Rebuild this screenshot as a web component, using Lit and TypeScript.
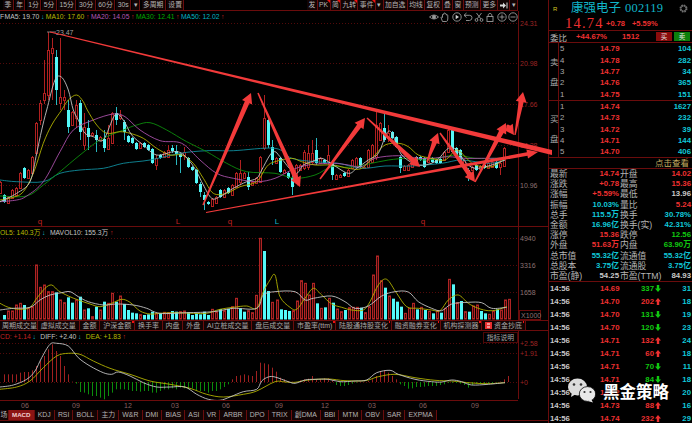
import { LitElement, html, svg, css } from 'lit';
import { customElement } from 'lit/decorators.js';

type Pts = number[][];

// coordinates below were read off 3x crops, so map them back to page pixels
const crop = (ox: number, oy: number, flat: number[]): Pts => {
  const out: Pts = [];
  for (let i = 0; i < flat.length; i += 2) out.push([ox + flat[i] / 3, oy + flat[i + 1] / 3]);
  return out;
};
const z1 = (f: number[]) => crop(0, 0, f);
const z8 = (f: number[]) => crop(0, 110, f);
const z9 = (f: number[]) => crop(275, 90, f);
const z10 = (f: number[]) => crop(0, 220, f);
const z11 = (f: number[]) => crop(275, 220, f);
const z6 = (f: number[]) => crop(0, 310, f);
const z7 = (f: number[]) => crop(275, 310, f);

// catmull-rom through the points
const curve = (p: Pts) => {
  let d = `M${p[0][0].toFixed(1)} ${p[0][1].toFixed(1)}`;
  for (let i = 0; i < p.length - 1; i++) {
    const a = p[Math.max(i - 1, 0)], b = p[i], c = p[i + 1], e = p[Math.min(i + 2, p.length - 1)];
    const c1 = [b[0] + (c[0] - a[0]) / 6, b[1] + (c[1] - a[1]) / 6];
    const c2 = [c[0] - (e[0] - b[0]) / 6, c[1] - (e[1] - b[1]) / 6];
    d += `C${c1[0].toFixed(1)} ${c1[1].toFixed(1)} ${c2[0].toFixed(1)} ${c2[1].toFixed(1)} ${c[0].toFixed(1)} ${c[1].toFixed(1)}`;
  }
  return d;
};

// [red?, bodyTop, bodyBottom, high, low], one every 4px starting at x=0
const CANDLES: number[][] = [
  [1,182,193],[0,195,202],[1,197,203],[1,190,198],[1,188,195],[1,173,188],[0,168,178],[1,170,178],
  [1,157,173],[1,123,153],[1,103,120,100,125],[1,93,100,60,104],[1,50,95,32,100],[1,48,53,38,100],
  [0,57,90,50,105],[1,97,103,38,110],[1,97,100,90,110],[0,110,127,100,133],[1,112,125],[1,105,118,100,128],
  [0,103,132,100,140],[1,127,145,113,150],[0,128,137,120,150],[1,133,135],[0,135,140,130,152],[1,137,140],
  [0,139,148,130,152],[1,138,149,125,150],[1,113,143],[0,113,120,107,125],[1,115,118,110,120],
  [0,122,132,120,140],[0,136,142],[0,138,143],[0,143,149],[1,143,148],[0,143,147],[0,145,150],
  [0,149,163],[1,158,165,155,170],[0,155,158],[1,152,157],[1,150,157,145,158],[0,148,151,145,153],
  [0,151,154,145,165],[0,154,157,153,173],[1,152,155,147,160],[0,158,167],[0,167,170],[0,170,183],
  [0,184,192,182,197],[0,195,200,192,210],[0,202,204],[1,199,206],[1,197,203],[0,190,197],[1,190,197],
  [0,188,193],[1,185,195],[1,173,187],[1,173,182,160,185],[1,173,178],[0,177,187,172,190],[1,182,185],
  [1,178,183],[1,157,182],[1,118,148,95,150],[0,120,145,115,148],[0,147,160,140,165],[1,158,163],
  [0,158,172],[1,170,173],[0,173,178],[0,178,187,172,195],[1,165,177],[1,165,170],[1,152,168,150,170],
  [1,153,167,145,170],[1,153,162,140,165],[0,150,163,138,165],[1,158,163],[0,160,163],[1,155,162,145,165],
  [0,162,175,160,180],[1,175,179],[1,175,177],[0,173,176],[1,170,176],[1,160,168],[1,158,167],[0,158,167],
  [1,167,168],[1,150,167],[1,145,162],[1,125,157,112,160],[1,123,140],[0,128,140,113,142],[1,133,138,125,142],
  [0,132,138],[0,137,147],[0,157,168,155,173],[1,166,170],[1,165,170],[1,162,167],[0,157,162],[0,157,160],
  [0,158,167],[1,158,162],[0,158,162],[0,160,163],[0,159,163],[1,152,160],[1,130,152],[0,130,152],
  [0,148,155],[0,150,162],[1,160,168],[0,170,178,168,181],[1,167,170],[0,165,170],[1,166,169],[0,165,168],
  [1,163,168],[1,162,167],[0,162,168],[1,163,167,160,175],[1,148,166],
];

// volume tops, crop y, negative = cyan, 4px apart from x=4
const VOL_A = [-285,273,273,255,250,-255,265,260,135,202,195,215,215,-217,240,248,-232,-248,240,-230,270,-265,290,-260,270,-245,250,220,-245,228,-252,-270,-278,-280,284,-285,-283,-275,280,-280,277,278,-273,-275,275,273,-277,-285,-280,-283,-275,-285,268,275,-267,272,-267,260,235,-265,-275,272,278,226,55,-93,-213,247];
const VOL_B = [240,-268,-270,-273,272,243,182,190,225,190,-250,265,-262,235,-248,267,275,-270,263,262,262,-263,278,260,165,108,182,-203,228,-236,-245,-260,280,265,250,-268,262,-270,274,-280,272,-278,265,178,-193,248,-243,275,-275,258,255,-273,-280,283,273,-268,270,240,238];

// macd bar ends in crop y, zero axis sits at 213
const MACD = [190,190,190,190,185,183,183,178,165,150,135,115,100,120,135,165,190,212,218,243,245,250,255,255,260,265,255,245,235,235,235,237,240,240,242,240,240,245,245,240,235,235,232,235,230,232,235,232,238,240,240,245,240,240,235,228,220,205,195,193,190,193,195,180,155,157,160,170,
  182,200,205,210,212,213,208,205,203,195,205,205,202,202,208,222,225,225,222,218,215,212,212,210,205,195,180,178,185,195,205,220,225,233,232,228,228,227,225,225,225,222,220,216,216,216,218,222,230,222,218,218,220,218,216,215,212,205,195];

const MA_LINES: [string, Pts][] = [
  ['ma50', [...z8([0,210,50,215,130,215,180,190,240,180,310,175,370,160,450,150,540,130,620,122,700,122,825,115]), ...z9([50,205,120,215,190,220,260,235,330,228,410,228,500,220,560,210,640,220,690,210])]],
  ['ma30', [...z8([0,258,80,258,130,225,180,185,240,135,300,90,370,60,410,45,450,38,500,60,560,95,620,125,680,160,740,185,825,190]), ...z9([60,265,120,255,170,230,220,232,280,222,340,210,400,205,460,210,540,195,600,205,660,205,690,205])]],
  ['ma20', [...z8([0,275,50,270,80,258,130,215,180,125,220,60,280,30,340,12,375,20,420,60,480,92,545,100,600,150,650,190,700,205,770,215,825,205]), ...z9([50,240,100,225,175,220,220,225,260,230,300,205,370,197,430,205,470,205,520,200,570,205,620,205,690,205])]],
  ['ma10', [...z8([0,270,40,262,70,245,100,190,130,100,155,45,185,0]), ...z1([205,300,230,285,250,305,262,330]), ...z8([290,45,320,70,360,65,390,70,430,85,470,115,510,135,545,135,580,160,610,205,640,250,680,250,720,230,770,215,800,170,825,155]), ...z9([50,205,80,215,120,225,175,225,220,235,260,235,300,195,330,165,370,160,400,170,430,195,470,205,510,210,545,180,575,205,600,225,650,230,690,205])]],
  ['ma5', [...z8([0,275,50,250,90,215,110,130,125,60,140,0]), ...z1([165,240,185,232,205,270,220,330]), ...z8([240,40,255,70,280,80,310,90,345,15,370,30,395,75,430,105,470,135,520,125,545,130,570,155,590,185,610,225,635,265,660,260,700,235,740,215,770,205,785,180,810,135,825,125]), ...z9([15,200,60,250,85,225,110,215,140,205,175,225,220,250,245,235,280,210,310,190,335,130,350,128,365,165,385,200,430,225,480,215,520,175,545,180,570,215,600,235,650,225,690,210])]],
];

const VOL_LINES: [string, Pts][] = [
  ['ma10', [...z10([0,250,25,262,60,268,90,262,110,235,135,205,155,195,175,212,205,228,235,240,270,252,300,260,335,250,365,238,390,247,420,273,450,282,480,280,520,278,580,280,620,280,660,268,700,262,740,258,770,265,790,215,810,180,825,165]), ...z11([15,230,45,262,65,268,90,235,115,205,140,225,170,252,200,262,230,270,265,270,285,245,310,195,335,178,365,220,395,260,430,265,470,270,495,272,520,240,550,225,580,250,610,265,640,272,665,270,695,260])]],
  ['ma5', [...z10([0,270,40,265,90,262,120,240,150,225,185,218,210,215,235,230,265,245,310,255,350,252,400,255,440,265,480,280,560,278,640,275,700,265,770,265,790,225,825,215]), ...z11([60,215,90,240,115,235,170,228,210,245,240,265,280,258,320,228,360,215,400,216,430,245,470,265,500,272,530,252,580,247,620,248,650,265,695,262])]],
];

const MACD_LINES: [string, Pts][] = [
  ['ma10', [...z6([0,235,50,228,90,210,130,170,170,135,205,127,240,130,280,150,330,172,390,190,450,210,510,220,570,232,620,250,670,258,730,250,770,240,825,212]), ...z7([30,213,60,214,100,207,160,204,210,209,270,209,310,197,360,190,420,200,480,208,530,210,590,216,640,218,690,215])]],
  ['ma5', [...z6([0,228,40,222,80,205,105,180,125,140,150,100,170,97,205,105,235,140,270,165,310,185,335,190,355,183,390,195,430,215,470,228,510,228,555,228,590,250,625,265,660,268,690,258,730,242,770,235,785,210,805,198,825,198]), ...z7([40,212,60,217,90,207,120,205,160,205,195,212,240,210,275,207,305,185,345,178,370,190,420,205,470,212,500,213,530,207,560,212,590,222,640,220,690,215])]],
];

// tapered shaft with a triangular head
const arrow = (x0: number, y0: number, x1: number, y1: number, tail = 1.5, neck = 5, head = 11, len = 10) => {
  const l = Math.hypot(x1 - x0, y1 - y0), ux = (x1 - x0) / l, uy = (y1 - y0) / l, nx = -uy, ny = ux;
  const bx = x1 - ux * len, by = y1 - uy * len;
  const p = [
    [x0 + nx * tail / 2, y0 + ny * tail / 2], [bx + nx * neck / 2, by + ny * neck / 2], [bx + nx * head / 2, by + ny * head / 2],
    [x1, y1],
    [bx - nx * head / 2, by - ny * head / 2], [bx - nx * neck / 2, by - ny * neck / 2], [x0 - nx * tail / 2, y0 - ny * tail / 2],
  ];
  return p.map((q) => q.map((v) => v.toFixed(1)).join(',')).join(' ');
};

const ARROWS = [
  [203, 205, 251, 93], [258, 93, 300, 187], [320, 179, 365, 118], [367, 118, 420, 167],
  [427, 162, 438, 133], [440, 133, 475, 182], [475, 182, 506, 123], [507, 125, 514, 135], [515, 135, 523, 92],
];

const TOP_LEFT = ['季', '年', '1分', '5分', '15分', '30分', '60分', '30s', '▾', '多周期', '设置'];
const TOP_RIGHT: [string, boolean][] = [['发', false], ['PK', true], ['简', true], ['九转', true], ['事件', true], ['▾', false], ['加自选', false], ['均线', false], ['复权', false], ['叠', false], ['窗', false], ['预测', false], ['更多', false]];
const VOL_TABS: [string, boolean][] = [['虚拟成交量', false], ['金额', false], ['沪深金额', true], ['换手率', false], ['内盘', false], ['外盘', false], ['AI立桩成交量', false], ['盘后成交量', false], ['市盈率(ttm)', true], ['陆股通持股变化', true], ['融资融券变化', true], ['机构探测器', true]];
const IND_TABS = ['KDJ', 'RSI', 'BOLL', '主力', 'W&R', 'DMI', 'BIAS', 'ASI', 'VR', 'ARBR', 'DPO', 'TRIX', '創DMA', 'BBI', 'MTM', 'OBV', 'SAR', 'EXPMA'];
const DATES: [string, number][] = [['06', 25], ['09', 76], ['12', 128], ['03', 175], ['06', 226], ['09', 279], ['12', 325], ['03', 372], ['06', 423], ['09', 475]];

@customElement('chart-panes')
class ChartPanes extends LitElement {
  static styles = css`
    :host {
      display: block;
      width: 548px;
      position: relative;
      z-index: 1;
      background: linear-gradient(#6a0c0c, #6a0c0c) 518px 11px / 1px 388px no-repeat;
      font-family: 'Liberation Sans', 'Noto Sans CJK SC', sans-serif;
    }
    svg { display: block; overflow: visible; }
    .toolbar {
      display: flex;
      width: 518px;
      height: 11px;
      box-sizing: border-box;
      padding-left: 3px;
      border-bottom: 1px solid #6a0c0c;
    }
    .group { display: flex; gap: 1.3px; }
    .btn {
      position: relative;
      display: flex;
      align-items: center;
      justify-content: center;
      padding: 0 1.4px;
      border: solid #6a0c0c;
      border-width: 0 1px 0 0;
      background: #120404;
      color: #b4b4b4;
      font-size: 6.8px;
      line-height: 10px;
      white-space: nowrap;
    }
    .btn.flag::after {
      content: '';
      position: absolute;
      top: 0;
      right: 0;
      border-top: 3px solid #f01010;
      border-left: 3px solid transparent;
    }
    .spacer { flex: 1; }
    .legend {
      display: flex;
      align-items: center;
      gap: 1.6px;
      height: 11px;
      font-size: 6.8px;
      line-height: 11px;
      white-space: nowrap;
      width: 518px;
    }
    .legend .up { color: #d02020; width: 3.3px; }
    .legend .down { color: #10b8c8; width: 3.3px; }
    .legend.split { border-top: 1px solid #6a0c0c; width: 548px; }
    .legend .wide { margin-left: 3px; }
    .tools { margin-left: auto; display: flex; gap: 1.3px; padding: 1px 0 0; }
    .tools svg { fill: none; stroke: #9a9a9a; stroke-width: 0.9; }
    .w { color: #c4c4c4; }
    .y { color: #b8b800; }
    .p { color: #b458b4; }
    .g { color: #00a800; }
    .b { color: #00b4c4; }
    .r { color: #c42222; }
    .tabs {
      display: flex;
      height: 11px;
      box-sizing: border-box;
      border-top: 1px solid #6a0c0c;
      border-bottom: 1px solid #6a0c0c;
    }
    .tabs .btn { color: #a8a8a8; font-size: 7px; padding: 0 2.85px; }
    .tabs .clip { width: 37px; padding: 0; justify-content: flex-end; overflow: hidden; }
    .dot::after {
      content: '';
      position: absolute;
      top: 0;
      right: 0.5px;
      width: 1.5px;
      height: 1.5px;
      background: #f01010;
    }
    .fund { display: inline-block; width: 7px; height: 7px; margin-right: 2px; }
    .help {
      margin: 1px 0 0 auto;
      padding: 0 3px;
      height: 9px;
      line-height: 9px;
      border: 1px solid #4c0808;
      color: #a8a8a8;
      font-size: 6.8px;
    }
    .bottom { display: flex; height: 11px; box-sizing: border-box; border-bottom: 1px solid #6a0c0c; }
    .bottom .btn { padding: 0 3.1px; font-size: 6.9px; }
    .bottom .clip { width: 8px; padding: 0; overflow: hidden; }
    .bottom .on { background: #8c1414; color: #f2d0d0; font-weight: bold; font-size: 6.2px; padding: 0 3px; }
    .grid { stroke: #520a0a; stroke-width: 1; stroke-dasharray: 1 2; }
    .axis { font-size: 7px; fill: #9c2424; }
    .axis.dim { fill: #8c7272; }
    .date { font-size: 7px; fill: #8a6060; text-anchor: middle; }
    .mark { font-size: 8px; text-anchor: middle; fill: #c42222; }
    .mark.c { fill: #10b8c8; }
    .line { fill: none; stroke-width: 0.9; }
    .ma5 { stroke: #c4c4c4; }
    .ma10 { stroke: #b0b000; }
    .ma20 { stroke: #a850a8; }
    .ma30 { stroke: #0c8c0c; }
    .ma50 { stroke: #108c9c; }
    .body-c { fill: #54f8f8; }
    .wick-c { stroke: #2ab8c0; stroke-width: 1; }
    .body-r { fill: none; stroke: #b02020; stroke-width: 1; }
    .wick-r { stroke: #b02020; stroke-width: 1; }
    .vol-r { fill: #3a0808; stroke: #b02424; stroke-width: 1; }
    .trend { fill: #f23a3a; }
    .box { fill: #000; stroke: #6a0c0c; stroke-width: 1; }
    .zero { stroke: #6a0c0c; stroke-width: 1; }
  `;

  private mainChart() {
    const rows = [[23, '24.31'], [63, '20.98'], [104, '17.66'], [145, '14.28'], [185, '10.96']] as [number, string][];
    return html`<svg width="548" height="204" viewBox="0 22 548 204">
      ${rows.map(([y, t], i) => svg`
        <line class="grid" x1="0" x2="518" y1=${y + 0.5} y2=${y + 0.5}></line>
        <text class="axis ${i === 4 ? 'dim' : ''}" x="520" y=${y + 3}>${t}</text>`)}
      ${CANDLES.map((c, i) => {
        const x = i * 4, hi = c[3] ?? c[1] - 1, lo = c[4] ?? c[2] + 1;
        return c[0]
          ? svg`<line class="wick-r" x1=${x + 0.5} x2=${x + 0.5} y1=${hi} y2=${c[1]}></line>
              <line class="wick-r" x1=${x + 0.5} x2=${x + 0.5} y1=${c[2]} y2=${lo}></line>
              <rect class="body-r" x=${x - 0.5} y=${c[1] + 0.5} width="2" height=${c[2] - c[1]}></rect>`
          : svg`<line class="wick-c" x1=${x + 0.5} x2=${x + 0.5} y1=${hi} y2=${lo}></line>
              <rect class="body-c" x=${x - 1} y=${c[1]} width="3" height=${c[2] - c[1]}></rect>`;
      })}
      ${MA_LINES.map(([k, p]) => svg`<path class="line ${k}" d=${curve(p)}></path>`)}
      <path d="M47 32H56" stroke="#999" stroke-width="0.8"></path>
      <text x="56" y="34.5" font-size="7" fill="#a0a0a0">23.47</text>
      <polygon class="trend" points="50,31.6 552,150 552,155 50,32.4"></polygon>
      <polygon class="trend" points=${arrow(206, 212.5, 538, 152, 0.8, 3.5, 9, 11)}></polygon>
      ${ARROWS.map(([a, b, c, d]) => svg`<polygon class="trend" points=${arrow(a, b, c, d)}></polygon>`)}
      <text class="mark" x="40" y="224">q</text>
      <text class="mark" x="178" y="224">L</text>
      <text class="mark" x="230" y="224">q</text>
      <text class="mark c" x="277" y="224">L</text>
      <text class="mark" x="423" y="224">q</text>
    </svg>`;
  }

  private volBar(v: number, x: number) {
    const cyan = v < 0, top = 220 + Math.abs(v) / 3;
    return cyan
      ? svg`<rect class="body-c" x=${x - 1} y=${top} width="3" height=${319.5 - top}></rect>`
      : svg`<rect class="vol-r" x=${x - 0.5} y=${top} width="2" height=${319 - top}></rect>`;
  }

  private volChart() {
    const rows = [[238, '4940'], [265, '3316'], [292, '1658']] as [number, string][];
    return html`<svg width="548" height="82" viewBox="0 238 548 82">
      ${rows.map(([y, t]) => svg`
        <line class="grid" x1="0" x2="518" y1=${y + 0.5} y2=${y + 0.5}></line>
        <text class="axis dim" x="520" y=${y + 3}>${t}</text>`)}
      ${VOL_A.map((v, i) => this.volBar(v, 4 + i * 4))}
      ${VOL_B.map((v, i) => this.volBar(v, 277 + i * 4))}
      ${VOL_LINES.map(([k, p]) => svg`<path class="line ${k}" d=${curve(p)}></path>`)}
      <rect class="box" x="519.5" y="310.5" width="21" height="9"></rect>
      <text class="axis dim" x="521" y="317.5">X1000</text>
    </svg>`;
  }

  private macdChart() {
    const rows = [[342, '+2.58'], [352, '+1.91'], [381, '+0']] as [number, string][];
    return html`<svg width="548" height="68" viewBox="0 341 548 68">
      ${rows.map(([y, t]) => svg`
        <line class="grid" x1="0" x2="518" y1=${y + 0.5} y2=${y + 0.5}></line>
        <text class="axis" x="520" y=${y + 3}>${t}</text>`)}
      ${MACD.map((v, i) => {
        const x = 4.5 + i * 4, y = 310 + v / 3;
        return svg`<line x1=${x} x2=${x} y1="381" y2=${y} stroke=${v < 213 ? '#a02020' : '#0c8c0c'} stroke-width="1"></line>`;
      })}
      ${MACD_LINES.map(([k, p]) => svg`<path class="line ${k}" d=${curve(p)}></path>`)}
      <line class="zero" x1="0" x2="518" y1="399.5" y2="399.5"></line>
      ${DATES.map(([t, x]) => svg`<text class="date" x=${x} y="407">${t}</text>`)}
    </svg>`;
  }

  render() {
    return html`
      <div class="toolbar">
        <span class="group">${TOP_LEFT.map((t) => html`<span class="btn">${t}</span>`)}</span>
        <span class="spacer"></span>
        ${TOP_RIGHT.map(([t, f]) => html`<span class="btn ${f ? 'flag' : ''}">${t}</span>`)}
        <span class="btn">
          <svg width="8" height="7" viewBox="0 0 8 7"><path d="M0 2.5H3V0.5L6 3.5L3 6.5V4.5H0Z M6.5 0.5H7.5V6.5H6.5Z" fill="#d8d8d8"></path></svg>
        </span>
        <span class="btn">▾</span>
      </div>
      <div class="legend">
        <span class="w" style="width:3px">F</span>
        <span class="w">MA5: 19.70</span><span class="down">↓</span>
        <span class="y">MA10: 17.60</span><span class="up">↑</span>
        <span class="p">MA20: 14.05</span><span class="up">↑</span>
        <span class="g">MA30: 12.41</span><span class="up">↑</span>
        <span class="b">MA50: 12.02</span><span class="up">↑</span>
        <span class="tools">
          <svg width="10" height="10" viewBox="0 0 10 10"><path d="M0.5 5Q5 1 9.5 5Q5 9 0.5 5Z"></path><circle cx="5" cy="5" r="1.5" fill="#9a9a9a"></circle></svg>
          <svg width="10" height="10" viewBox="0 0 10 10"><path d="M2.5 9.5L1 5.5Q1 4.5 2.5 5.5V2.5Q3 1.5 3.7 2.5V1.5Q4.3 0.5 5 1.5V2Q5.7 1.2 6.3 2V3Q7.2 2.4 7.8 3.2V7Q7.5 9.5 6.5 9.5Z"></path></svg>
          <svg width="10" height="10" viewBox="0 0 10 10"><circle cx="5" cy="5" r="4.2"></circle><path d="M3.7 2.8L7 5L3.7 7.2Z" fill="#d0d0d0" stroke="none"></path></svg>
          <svg width="10" height="10" viewBox="0 0 10 10"><path d="M3.5 1L1 3.3L3.5 5.5M1 3.3H6.5Q9 3.3 9 5.7T6.5 8.5H3"></path></svg>
          <svg width="10" height="10" viewBox="0 0 10 10"><circle cx="2.5" cy="8" r="1.4"></circle><circle cx="7.5" cy="8" r="1.4"></circle><path d="M3.2 6.8L7.5 1M6.8 6.8L2.5 1"></path></svg>
          <svg width="10" height="10" viewBox="0 0 10 10"><rect x="2" y="4.5" width="6" height="5"></rect><path d="M3.2 4.5V2.5Q5 0 6.8 2.5V4.5"></path></svg>
          <svg width="10" height="10" viewBox="0 0 10 10"><circle cx="5" cy="5" r="4.2"></circle><path d="M5 2.5V7.5M2.5 5H7.5"></path></svg>
          <svg width="10" height="10" viewBox="0 0 10 10"><circle cx="5" cy="5" r="4.2"></circle><path d="M2.5 5H7.5"></path></svg>
        </span>
      </div>
      ${this.mainChart()}
      <div class="legend split">
        <span class="y">OL5: 140.3万</span><span class="down">↓</span>
        <span class="w wide">MAVOL10: 155.3万</span><span class="up">↑</span>
      </div>
      ${this.volChart()}
      <div class="tabs">
        <span class="btn clip">周期成交量</span>
        ${VOL_TABS.map(([t, d]) => html`<span class="btn ${d ? 'dot' : ''}">${t}</span>`)}
        <span class="btn dot">
          <svg class="fund" viewBox="0 0 7 7"><rect width="7" height="7" fill="#e83030"></rect><path d="M2 2H5M2 5H5" stroke="#fff" stroke-width="1"></path></svg>资金抄底
        </span>
      </div>
      <div class="legend">
        <span class="r">CD: +1.14</span><span class="down">↓</span>
        <span class="w wide">DIFF: +2.40</span><span class="down">↓</span>
        <span class="y wide">DEA: +1.83</span><span class="up">↑</span>
        <span class="help">指标说明</span>
      </div>
      ${this.macdChart()}
      <div class="bottom">
        <span class="btn clip">场</span>
        <span class="btn on">MACD</span>
        ${IND_TABS.map((t) => html`<span class="btn">${t}</span>`)}
      </div>
    `;
  }
}

const ASK = [['5', '14.79', '104'], ['4', '14.78', '282'], ['3', '14.77', '34'], ['2', '14.76', '365'], ['1', '14.75', '151']];
const BID = [['1', '14.74', '1627'], ['2', '14.73', '232'], ['3', '14.72', '39'], ['4', '14.71', '144'], ['5', '14.70', '406']];
const STATS: [string, string, string, string, string, string][] = [
  ['最新', '14.74', 'r', '开盘', '14.02', 'r'],
  ['涨跌', '+0.78', 'r', '最高', '15.36', 'r'],
  ['涨幅', '+5.59%', 'r', '最低', '13.96', 'w'],
  ['振幅', '10.03%', 'b', '量比', '5.24', 'r'],
  ['总手', '115.5万', 'b', '换手', '30.78%', 'b'],
  ['金额', '16.96亿', 'b', '换手(实)', '42.31%', 'b'],
  ['涨停', '15.36', 'r', '跌停', '12.56', 'g'],
  ['外盘', '51.63万', 'r', '内盘', '63.90万', 'g'],
  ['总市值', '55.32亿', 'b', '流通值', '55.32亿', 'b'],
  ['总股本', '3.75亿', 'b', '流通股', '3.75亿', 'b'],
  ['市盈(静)', '54.25', 'w', '市盈(TTM)', '84.93', 'w'],
];
// the volume of row 9 sits under the watermark
const TRADES: [string, string, boolean, string][] = [
  ['14.69', '337', false, '31'], ['14.70', '202', true, '18'], ['14.70', '131', false, '19'], ['14.70', '120', false, '23'],
  ['14.71', '132', true, '24'], ['14.71', '60', true, '18'], ['14.71', '70', false, '11'], ['14.71', '84', false, '18'],
  ['14.72', '', true, '20'], ['14.73', '88', true, '16'], ['14.74', '232', true, '29'],
];

@customElement('quote-panel')
class QuotePanel extends LitElement {
  static styles = css`
    :host {
      display: grid;
      grid-template-rows: 17px 14px 12px 58px 57px 11px 113px 1fr;
      width: 144px;
      height: 423px;
      box-sizing: border-box;
      overflow: hidden;
      border-left: 1px solid #6a0c0c;
      font-family: 'Liberation Sans', 'Noto Sans CJK SC', sans-serif;
      font-size: 7.8px;
      font-weight: bold;
      color: #c8c8c8;
    }
    .r { color: #ee3030; }
    .g { color: #10c810; }
    .b { color: #10c8d8; }
    .w { color: #c8c8c8; }
    .title { display: flex; align-items: center; padding: 0 4px 0 4px; color: #10b4c8; font-weight: normal; }
    .title .tag { color: #d8c820; font-size: 6px; width: 18px; }
    .title .name { font-size: 12.5px; line-height: 17px; }
    .title .code { font-family: 'Liberation Serif', serif; font-size: 12.5px; margin-left: 4px; letter-spacing: 0.2px; }
    .title svg { margin-left: auto; }
    .price { display: flex; align-items: center; padding-left: 16px; border-bottom: 1px solid #6a0c0c; color: #ee3030; }
    .price b { font-family: 'Liberation Serif', serif; font-weight: normal; font-size: 14.5px; letter-spacing: 1.2px; width: 41px; }
    .price span { margin-right: 7px; font-size: 7.5px; }
    .ratio { display: flex; align-items: center; border-bottom: 1px solid #6a0c0c; color: #ee3030; }
    .ratio .lab { width: 26px; padding-left: 1px; font-size: 8.5px; font-weight: normal; color: #b8b8b8; }
    .ratio .pct { width: 46px; }
    .ratio .vol { width: 34px; }
    .ratio .bs { width: 16px; height: 9px; line-height: 9px; text-align: center; font-size: 6.5px; font-weight: normal; color: #e0e0e0; }
    .ratio .buy { background: #8a0c0c; margin-right: 2px; }
    .ratio .sell { background: #0c800c; }
    .side { display: grid; grid-template-columns: 10px 1fr; border-bottom: 1px solid #6a0c0c; }
    .side .tall {
      display: flex;
      flex-direction: column;
      justify-content: center;
      gap: 10px;
      padding-left: 1px;
      border-right: 1px solid #6a0c0c;
      font-size: 8.5px;
      font-weight: normal;
      line-height: 10px;
      color: #a8a8a8;
    }
    .rows { display: flex; flex-direction: column; }
    .row { flex: 1; display: grid; grid-template-columns: 40px 30px 1fr; align-items: center; padding: 0 1px; }
    .row .qty { text-align: right; color: #10c8d8; }
    .row .lvl { color: #a8a8a8; font-weight: normal; }
    .more { border-bottom: 1px solid #6a0c0c; text-align: right; padding-right: 3px; color: #c4ac60; font-size: 8.5px; font-weight: normal; line-height: 10px; }
    .stats { display: grid; grid-template-rows: repeat(11, 1fr); padding: 0 1px; border-bottom: 1px solid #6a0c0c; }
    .stat { display: grid; grid-template-columns: 69px 1fr; align-items: center; gap: 1px; }
    .pair { display: flex; justify-content: space-between; align-items: center; white-space: nowrap; line-height: 10px; }
    .pair .k { font-size: 8.8px; font-weight: normal; color: #b4b4b4; }
    .trades { display: flex; flex-direction: column; }
    .trade { flex: 0 0 13px; display: grid; grid-template-columns: 50px 27px 1fr 30px; align-items: center; padding: 0 1px 0 1px; line-height: 13px; }
    .trade .qty { display: flex; justify-content: flex-end; align-items: center; gap: 1px; }
    .trade .tail { text-align: right; color: #10c8d8; }
    .trade svg { width: 6px; height: 7px; }
  `;

  private side(label: string[], rows: string[][]) {
    return html`<div class="side">
      <div class="tall">${label.map((t) => html`<span>${t}</span>`)}</div>
      <div class="rows">
        ${rows.map((r) => html`<div class="row"><span class="lvl">${r[0]}</span><span class="r">${r[1]}</span><span class="qty">${r[2]}</span></div>`)}
      </div>
    </div>`;
  }

  render() {
    return html`
      <div class="title">
        <span class="tag">R</span>
        <span class="name">康强电子</span><span class="code">002119</span>
        <svg width="9" height="9" viewBox="0 0 9 9"><circle cx="4.5" cy="4.5" r="3.2" fill="none" stroke="#6e6e6e" stroke-width="1.6" stroke-dasharray="1.6 0.9"></circle><circle cx="4.5" cy="4.5" r="2.6" fill="none" stroke="#6e6e6e"></circle></svg>
      </div>
      <div class="price"><b>14.74</b><span>+0.78</span><span>+5.59%</span></div>
      <div class="ratio">
        <span class="lab">委比</span><span class="pct">+44.67%</span><span class="vol">1512</span>
        <span class="bs buy">买</span><span class="bs sell">卖</span>
      </div>
      ${this.side(['卖', '盘'], ASK)}
      ${this.side(['买', '盘'], BID)}
      <div class="more">点击查看</div>
      <div class="stats">
        ${STATS.map((s) => html`<div class="stat">
          <div class="pair"><span class="k">${s[0]}</span><span class=${s[2]}>${s[1]}</span></div>
          <div class="pair"><span class="k">${s[3]}</span><span class=${s[5]}>${s[4]}</span></div>
        </div>`)}
      </div>
      <div class="trades">
        ${TRADES.map((t) => html`<div class="trade">
          <span>14:56</span><span class="r">${t[0]}</span>
          <span class="qty ${t[2] ? 'r' : 'g'}">${t[1]}
            ${t[1] ? html`<svg viewBox="0 0 6 7"><path fill="currentColor" d=${t[2] ? 'M3 0L6 3.5H4.2V7H1.8V3.5H0Z' : 'M3 7L6 3.5H4.2V0H1.8V3.5H0Z'}></path></svg>` : ''}
          </span>
          <span class="tail">${t[3]}</span>
        </div>`)}
      </div>
    `;
  }
}

@customElement('app-root')
export class AppRoot extends LitElement {
  static styles = css`
    :host {
      display: flex;
      position: relative;
      width: 692px;
      height: 423px;
      overflow: hidden;
      background: #000;
    }
    .mark {
      position: absolute;
      left: 568px;
      top: 378px;
      z-index: 2;
      display: flex;
      align-items: center;
      gap: 7px;
      color: #fff;
      font-family: 'Noto Sans CJK SC', sans-serif;
      font-size: 16.5px;
      font-weight: bold;
      line-height: 20px;
      text-shadow: 0 0 2px #000, 0 0 1px #000;
    }
  `;

  render() {
    return html`
      <chart-panes></chart-panes>
      <quote-panel></quote-panel>
      <div class="mark">
        <svg width="28" height="25" viewBox="0 0 28 25">
          <ellipse cx="9.5" cy="9" rx="9.5" ry="8.5" fill="#dcdcdc"></ellipse>
          <path d="M4 14L3 19L8 16Z" fill="#dcdcdc"></path>
          <circle cx="6" cy="6.5" r="1.3" fill="#333"></circle><circle cx="13" cy="6.5" r="1.3" fill="#333"></circle>
          <ellipse cx="19.5" cy="16" rx="8.2" ry="7.4" fill="#e8e8e8" stroke="#000" stroke-width="0.8"></ellipse>
          <path d="M23 21L25 24.5L20 23Z" fill="#e8e8e8"></path>
          <circle cx="16.5" cy="14" r="1.1" fill="#333"></circle><circle cx="22.5" cy="14" r="1.1" fill="#333"></circle>
        </svg>
        <span>黑金策略</span>
      </div>
    `;
  }
}
